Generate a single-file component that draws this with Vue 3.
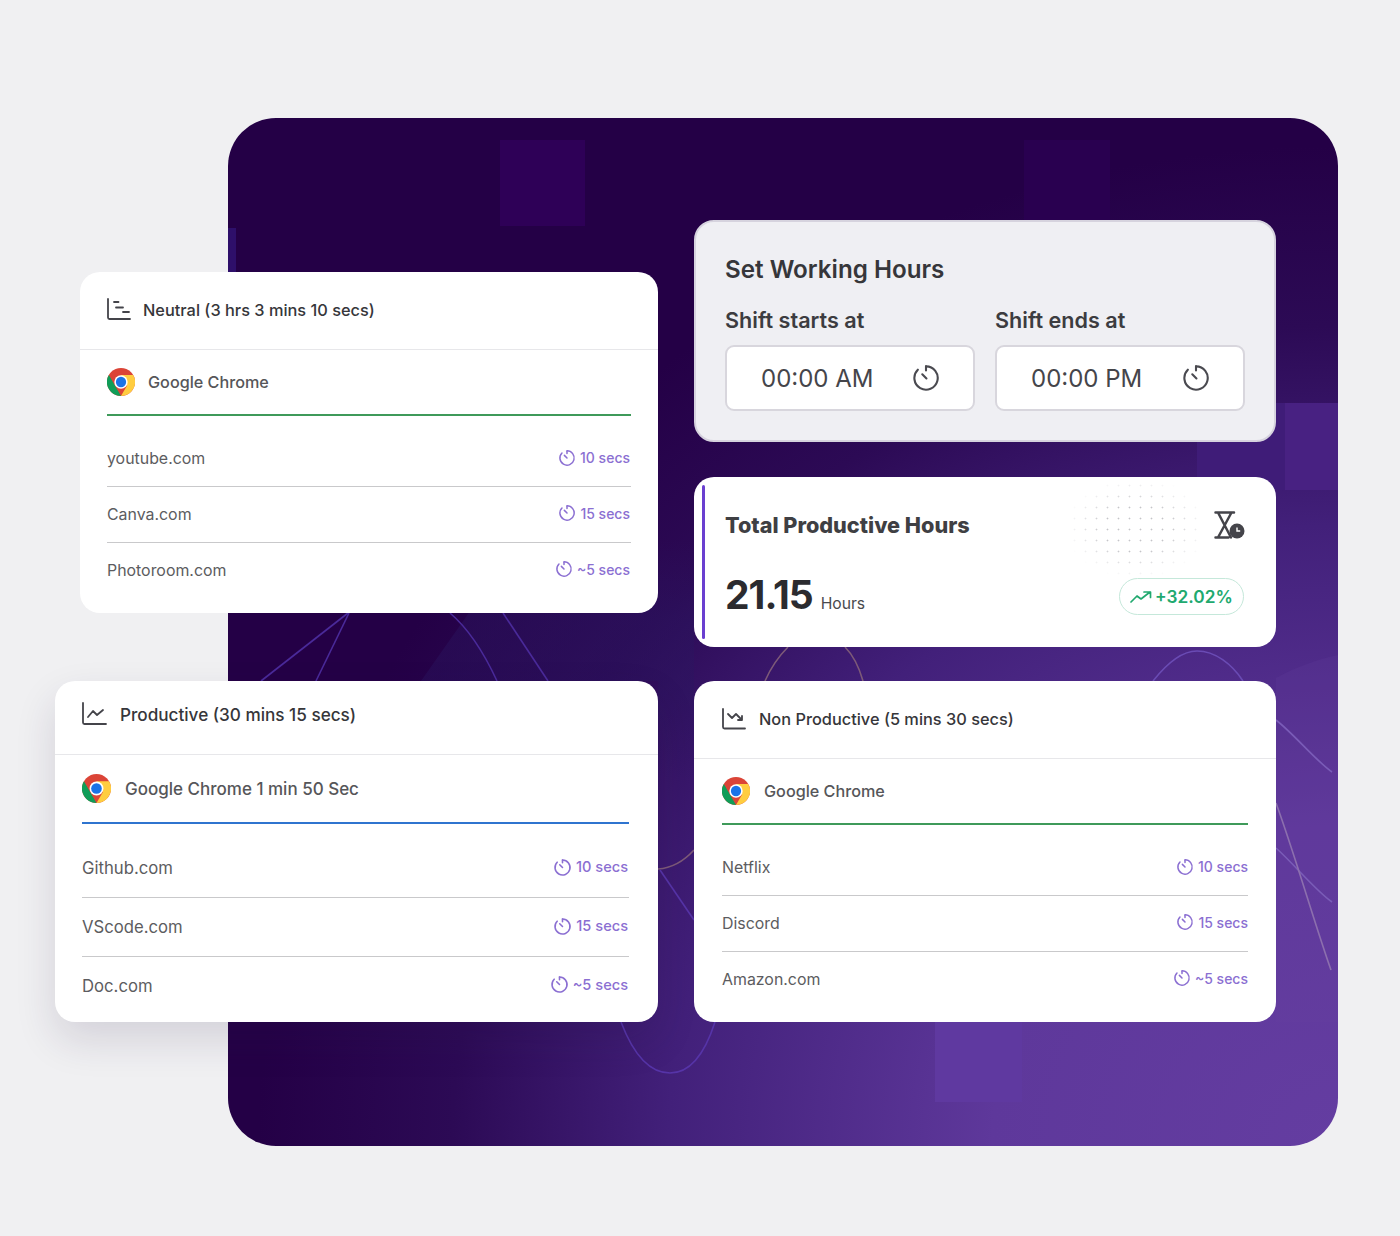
<template>
  <div class="page">
    <div class="stage">
      <div class="panel">
        <svg class="panel-art" width="1110" height="1028" viewBox="228 118 1110 1028" fill="none">
          <defs>
            <linearGradient id="wedge" gradientUnits="userSpaceOnUse" x1="0" y1="540" x2="0" y2="780">
              <stop offset="0" stop-color="#2a1660" stop-opacity="0" />
              <stop offset=".33" stop-color="#2a1660" stop-opacity=".42" />
              <stop offset=".62" stop-color="#2a1660" stop-opacity=".42" />
              <stop offset="1" stop-color="#2a1660" stop-opacity="0" />
            </linearGradient>
          </defs>
          <g>
            <rect x="500" y="140" width="85" height="86" fill="#2e0057" />
            <rect x="1024" y="140" width="86" height="86" fill="#290050" />
            <rect x="228" y="228" width="8" height="44" fill="#2e0f6a" />
            <rect x="1197" y="403" width="88" height="87" fill="#3f1c78" />
            <rect x="1285" y="403" width="53" height="87" fill="#482182" />
            <rect x="935" y="1022" width="87" height="80" fill="#5f39a0" />
            <path d="M421 681 L520 540 L694 540 L694 780 L658 780 L658 681 Z" fill="url(#wedge)" />
            <path d="M1276 678 C1296 667 1318 659 1338 655 L1338 1022 L1276 1022 Z" fill="#6a45a0" opacity=".18" />
          </g>
          <g stroke="#4a2a9a" stroke-width="1.6">
            <path d="M348 613 L261 681" />
            <path d="M349 613 L316 681" />
            <path d="M450 613 C470 630 485 655 497 681" />
            <path d="M503 613 L548 681" />
            <path d="M621 1022 C634 1056 650 1073 670 1073 C692 1073 706 1050 715 1022" stroke="#5634a8" />
            <path d="M1153 681 C1168 662 1182 651 1197 651 C1215 651 1232 664 1243 681" stroke="#6a4bb4" />
            <path d="M1276 720 C1295 735 1315 760 1332 772" stroke="#7a5cb8" />
            <path d="M1276 848 C1295 865 1315 890 1332 902" stroke="#7a5cb8" />
            <path d="M1276 803 C1295 855 1315 925 1331 970" stroke="#8c6fae" />
            <path d="M765 681 C772 665 780 655 788 647" stroke="#7d5a78" />
            <path d="M845 647 C853 655 859 667 863 681" stroke="#7d5a78" />
            <path d="M658 869 C672 868 684 861 694 850" stroke="#7d5a78" />
            <path d="M660 870 L694 920" stroke="#5634a8" />
          </g>
        </svg>
      </div>

      <section v-for="card in cards" :key="card.id" class="card" :class="`card-${card.id}`">
        <header class="card-head">
          <svg class="head-icon" :width="card.icon.w" :height="card.icon.h" :viewBox="`0 0 ${card.icon.w} ${card.icon.h}`" fill="none" stroke="#44444a" stroke-width="1.8" stroke-linecap="round" stroke-linejoin="round">
            <path v-for="d in card.icon.paths" :key="d" :d="d" />
          </svg>
          <span>{{ card.title }}</span>
        </header>
        <div class="app-row">
          <svg class="chrome" viewBox="0 0 48 48">
            <circle cx="24" cy="24" r="24" fill="#db4437" />
            <path d="M3.2 12 L24 48 A24 24 0 0 1 3.2 12 Z" fill="#0f9d58" />
            <path d="M24 12 H44.800 A24 24 0 0 1 24 48 L34.400 30 Z" fill="#ffcd40" />
            <circle cx="24" cy="24" r="11.500" fill="#fff" />
            <circle cx="24" cy="24" r="8.800" fill="#1a73e8" />
          </svg>
          <span>{{ card.app }}</span>
        </div>
        <ul class="sites">
          <li v-for="row in card.rows" :key="row.name">
            <span>{{ row.name }}</span>
            <span class="time">
              <svg class="time-icon" viewBox="0 0 24 24" fill="none" stroke="currentColor" stroke-width="2" stroke-linecap="round"><path d="M12 2.500a9.500 9.500 0 1 1-6.700 2.800" /><path d="M12 2.500V6M12 12 8.500 8.500" /></svg>
              {{ row.time }}
            </span>
          </li>
        </ul>
      </section>

      <section class="hours">
        <h2>Set Working Hours</h2>
        <div class="shifts">
          <div v-for="shift in shifts" :key="shift.label" class="shift">
            <label>{{ shift.label }}</label>
            <div class="time-input">
              <span>{{ shift.value }}</span>
              <svg width="28" height="28" viewBox="0 0 24 24" fill="none" stroke="#4a4a50" stroke-width="1.800" stroke-linecap="round"><path d="M12 2a10 10 0 1 1-7 2.900" /><path d="M12 2v3.500M12.400 12.400 8.800 8.800" /></svg>
            </div>
          </div>
        </div>
      </section>

      <section class="total">
        <div class="dots"></div>
        <div class="total-top">
          <h3>Total Productive Hours</h3>
          <svg width="32" height="28" viewBox="0 0 32 28" fill="none">
            <path d="M2.500 1.500h18.500M2.500 26.500h13M5 1.500 L18 26.500M18.500 1.500 L5 26.500" stroke="#44444a" stroke-width="2.500" stroke-linecap="round" />
            <circle cx="24" cy="20" r="7.500" fill="#44444a" />
            <path d="M24 16.500V20h3.200" stroke="#fff" stroke-width="1.400" fill="none" />
          </svg>
        </div>
        <div class="total-bottom">
          <div class="figure"><strong>21.15</strong><span>Hours</span></div>
          <div class="pill">
            <svg width="22" height="12" viewBox="0 0 22 12" fill="none" stroke="#21a96f" stroke-width="1.700" stroke-linecap="round" stroke-linejoin="round"><path d="M1 11l6-6 4 3 9-7M14 1h6.500v5.500" /></svg>
            +32.02%
          </div>
        </div>
      </section>
    </div>
  </div>
</template>

<script setup>
const cards = [
  {
    id: 'neutral',
    title: 'Neutral (3 hrs 3 mins 10 secs)',
    app: 'Google Chrome',
    icon: {
      w: 24,
      h: 24,
      paths: ['M1 1v18.500a1.500 1.500 0 0 0 1.500 1.500H23', 'M7 4h4.500M9 9.500h7M16 14h6']
    },
    rows: [
      { name: 'youtube.com', time: '10 secs' },
      { name: 'Canva.com', time: '15 secs' },
      { name: 'Photoroom.com', time: '~5 secs' }
    ]
  },
  {
    id: 'productive',
    title: 'Productive (30 mins 15 secs)',
    app: 'Google Chrome 1 min 50 Sec',
    icon: {
      w: 25,
      h: 24,
      paths: ['M1 1v19.500a1.500 1.500 0 0 0 1.500 1.500H24', 'M6 15l5-6 4 4 6-5']
    },
    rows: [
      { name: 'Github.com', time: '10 secs' },
      { name: 'VScode.com', time: '15 secs' },
      { name: 'Doc.com', time: '~5 secs' }
    ]
  },
  {
    id: 'non',
    title: 'Non Productive (5 mins 30 secs)',
    app: 'Google Chrome',
    icon: {
      w: 24,
      h: 22,
      paths: ['M1 1v18a1.500 1.500 0 0 0 1.500 1.500H23', 'M6 6l4 4 4-4 6 6M20 8v4h-4']
    },
    rows: [
      { name: 'Netflix', time: '10 secs' },
      { name: 'Discord', time: '15 secs' },
      { name: 'Amazon.com', time: '~5 secs' }
    ]
  }
]

const shifts = [
  { label: 'Shift starts at', value: '00:00 AM' },
  { label: 'Shift ends at', value: '00:00 PM' }
]
</script>

<style>
html, body { margin: 0; background: #f0f0f2; }
</style>

<style scoped>
.page {
  width: 1400px;
  height: 1236px;
  background: #f0f0f2;
  overflow: hidden;
  font-family: Inter, "Liberation Sans", sans-serif;
  color: #3c3c40;
}
.stage { position: relative; width: 1400px; height: 1236px; }
.panel {
  position: absolute;
  left: 228px;
  top: 118px;
  width: 1110px;
  height: 1028px;
  border-radius: 48px;
  overflow: hidden;
  background: radial-gradient(ellipse 1080px 1000px at 100% 100%, #643da1 0%, #5e389b 32%, #42207a 62%, #2c0a55 82%, #240046 100%);
}
.panel-art { display: block; }

.card {
  position: absolute;
  box-sizing: border-box;
  background: #fff;
  border-radius: 20px;
  display: flex;
  flex-direction: column;
}
.card-neutral { left: 80px; top: 272px; width: 578px; height: 341px; --pad-l: 27px; --pad-r: 27px; --line: #3f9a5a; }
.card-productive {
  left: 55px; top: 681px; width: 603px; height: 341px; --pad-l: 27px; --pad-r: 29px; --line: #2f74cf;
  box-shadow: 0 18px 40px rgba(40, 30, 70, .14);
}
.card-non { left: 694px; top: 681px; width: 582px; height: 341px; --pad-l: 28px; --pad-r: 28px; --line: #3f9a5a; }

.card-head {
  box-sizing: border-box;
  display: flex;
  align-items: center;
  gap: 12px;
  height: 78px;
  padding: 0 var(--pad-r) 2px var(--pad-l);
  border-bottom: 1px solid #e7e7ea;
  font-size: 16.350px;
  font-weight: 500;
  color: #36363a;
}
.card-productive .card-head { height: 74px; gap: 13px; padding-bottom: 7px; font-size: 17.150px; }
.card-non .card-head { gap: 13px; }
.app-row {
  box-sizing: border-box;
  display: flex;
  align-items: center;
  gap: 13px;
  height: 66px;
  margin: 0 var(--pad-r) 0 var(--pad-l);
  border-bottom: 2px solid var(--line);
  font-size: 16.200px;
  font-weight: 500;
  color: #565659;
}
.card-productive .app-row { height: 69px; gap: 14px; font-size: 17px; }
.card-non .app-row { gap: 14px; }
.chrome { width: 28px; height: 28px; flex: none; }
.card-productive .chrome { width: 29px; height: 29px; }
.sites {
  list-style: none;
  margin: 14px 0 0;
  padding: 0 var(--pad-r) 0 var(--pad-l);
  flex: 1;
}
.sites li {
  box-sizing: border-box;
  display: flex;
  align-items: center;
  justify-content: space-between;
  height: 56.500px;
  border-bottom: 1px solid #c9c9cb;
  font-size: 15.900px;
  color: #5c5c60;
}
.sites li:first-child { padding-top: 2px; }
.sites li:last-child { border-bottom: 0; padding-bottom: 2px; }
.card-productive .sites { margin-top: 15px; }
.card-productive .sites li { height: 59px; font-size: 16.700px; }
.card-productive .sites li:first-child { padding-top: 0; }
.time {
  display: inline-flex;
  align-items: center;
  gap: 4px;
  margin: 0 1px 2px 0;
  font-size: 14px;
  font-weight: 500;
  color: #8b6fd2;
}
.card-productive .time { font-size: 14.600px; }
.card-non .time { margin-right: 0; }
.time-icon { width: 18px; height: 18px; flex: none; }
.card-productive .time-icon { width: 19px; height: 19px; }

.hours {
  position: absolute;
  left: 694px;
  top: 220px;
  box-sizing: border-box;
  width: 582px;
  height: 222px;
  padding: 33px 29px 0;
  background: #efeff3;
  border: 2px solid #d6d3de;
  border-radius: 20px;
}
.hours h2 { margin: 0; font-size: 24.200px; line-height: 30px; font-weight: 600; color: #36363a; }
.shifts { display: flex; gap: 20px; margin-top: 21px; }
.shift { flex: none; width: 250px; }
.shift label { display: block; font-size: 21.600px; line-height: 28px; font-weight: 600; color: #3c3c40; }
.time-input {
  box-sizing: border-box;
  display: flex;
  align-items: center;
  justify-content: space-between;
  height: 66px;
  margin-top: 11px;
  padding: 0 33px 0 34px;
  background: #fff;
  border: 2px solid #d8d6dd;
  border-radius: 9px;
  font-size: 24px;
  color: #45454a;
}

.total {
  position: absolute;
  left: 694px;
  top: 477px;
  box-sizing: border-box;
  width: 582px;
  height: 170px;
  padding: 0 31px;
  background: #fff;
  border-radius: 20px;
}
.total::before {
  content: "";
  position: absolute;
  left: 8px;
  top: 8px;
  bottom: 8px;
  width: 3px;
  background: #6a3fd0;
  border-radius: 2px;
}
.dots {
  position: absolute;
  left: 375px;
  top: 3px;
  width: 135px;
  height: 96px;
  background-image: radial-gradient(circle, #c4c4c8 0.800px, transparent 1.100px);
  background-size: 11px 11px;
  -webkit-mask-image: radial-gradient(ellipse at center, #000 35%, transparent 75%);
  mask-image: radial-gradient(ellipse at center, #000 35%, transparent 75%);
}
.total-top {
  position: relative;
  display: flex;
  align-items: center;
  justify-content: space-between;
  height: 96px;
}
.total h3 { margin: 0; font-size: 21.650px; font-weight: 800; color: #3f3f43; }
.total-bottom {
  position: relative;
  display: flex;
  align-items: center;
  justify-content: space-between;
  padding-right: 1px;
  margin-top: -2px;
}
.figure { display: flex; align-items: baseline; gap: 8px; }
.figure strong { font-size: 39px; line-height: 48px; font-weight: 700; letter-spacing: -1px; color: #2b2b2f; }
.figure span { font-size: 15.700px; color: #4a4a4e; }
.pill {
  display: flex;
  align-items: center;
  gap: 3px;
  box-sizing: border-box;
  width: 125px;
  height: 37px;
  margin-top: 3px;
  padding-left: 10px;
  border: 1.500px solid #c5e8da;
  border-radius: 19px;
  font-size: 17.300px;
  font-weight: 600;
  color: #21a96f;
}
</style>
